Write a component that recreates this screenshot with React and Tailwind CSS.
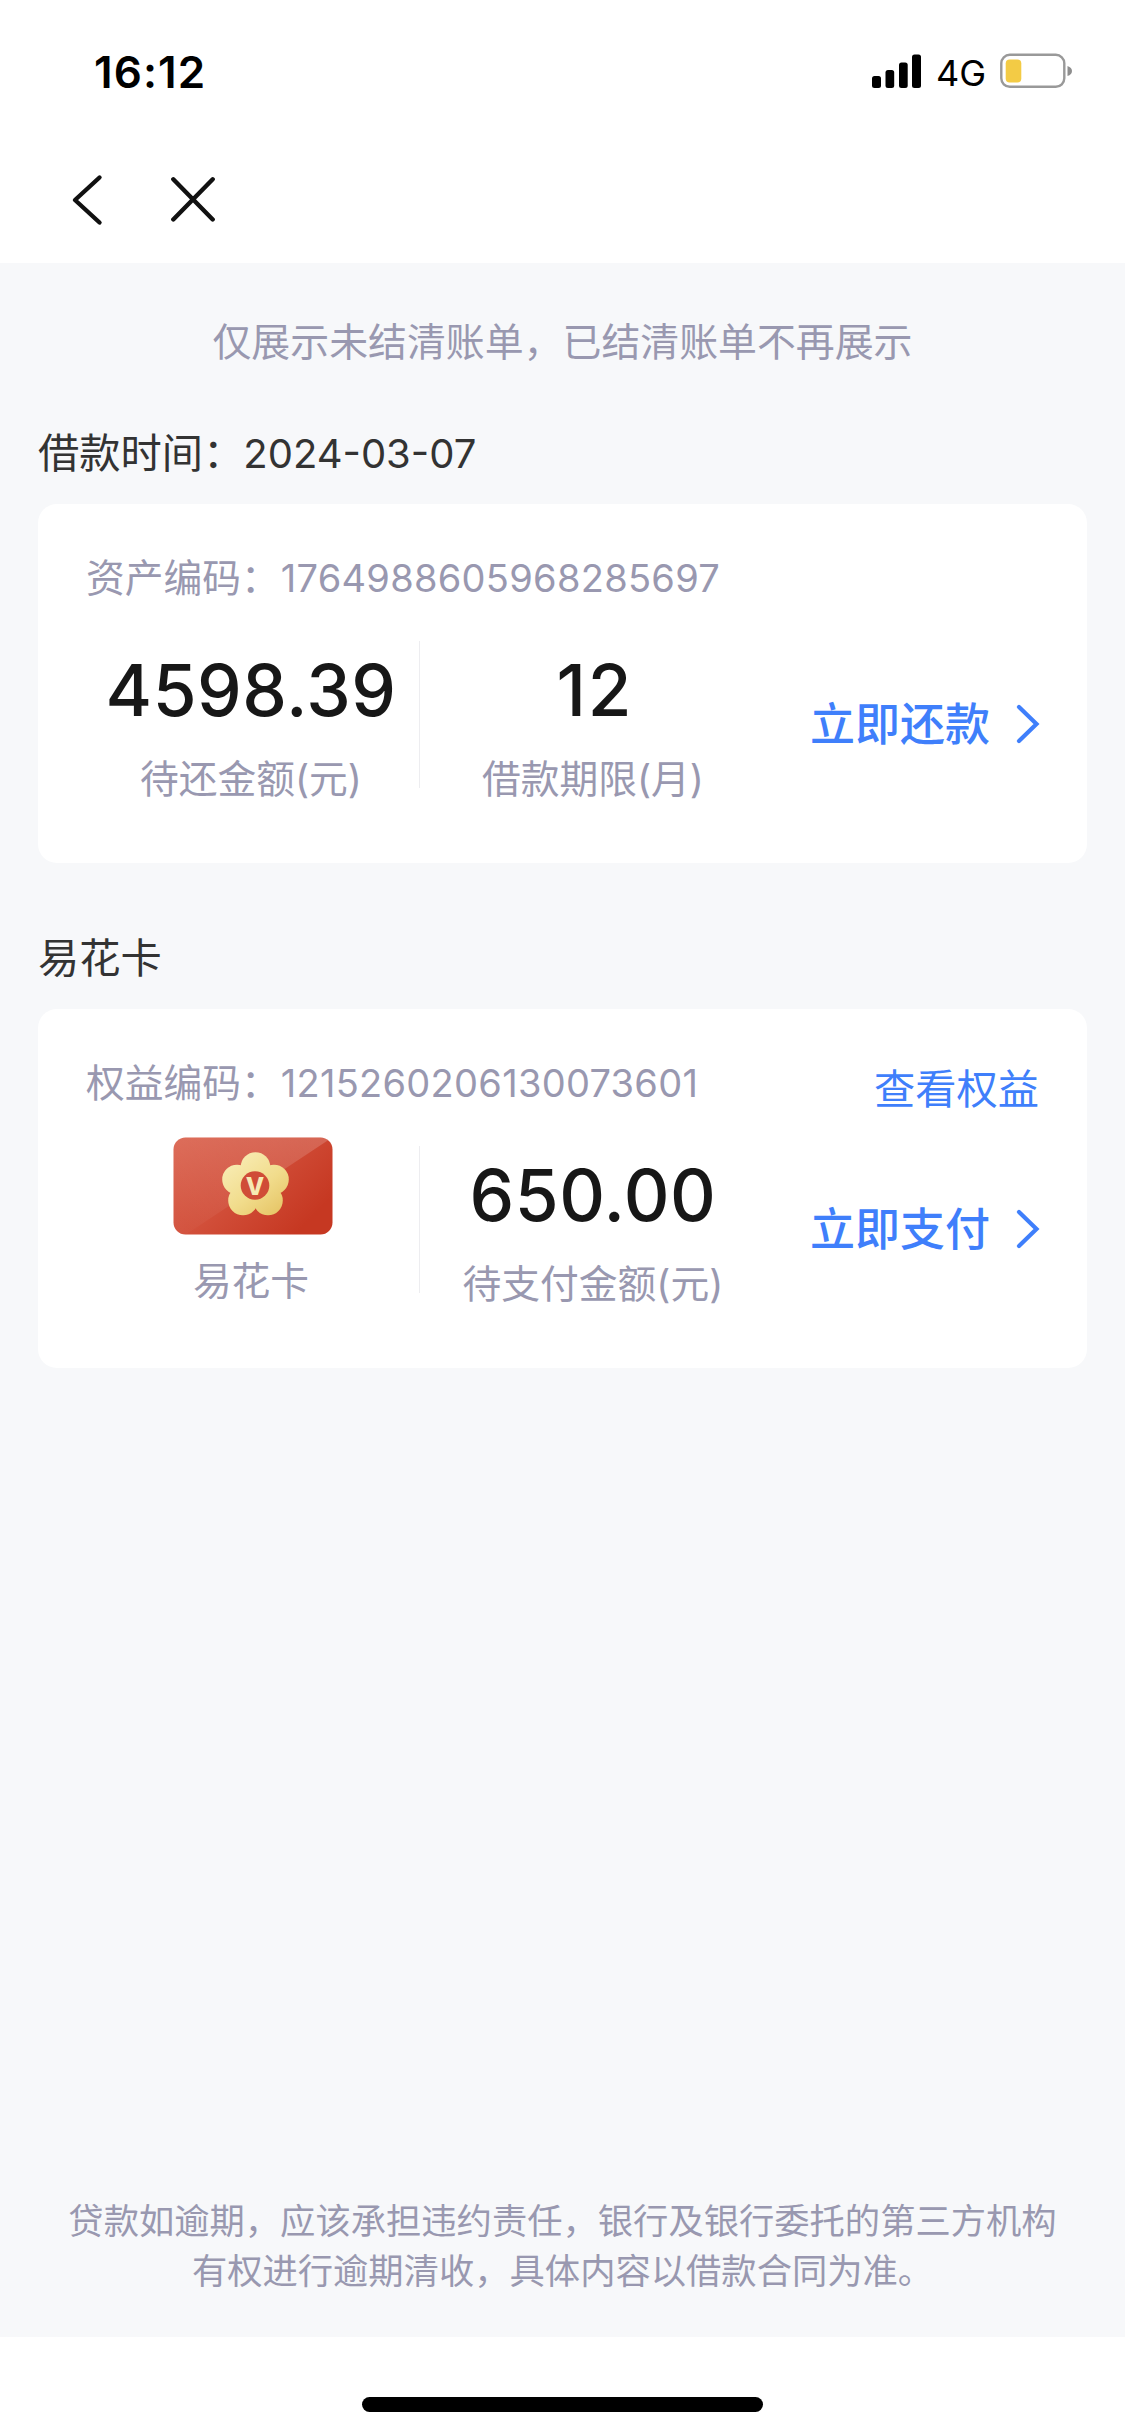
function StatusBar() {
  return (
    <div className="flex h-[144px] items-start justify-between pl-[94px] pr-[52px] pt-[46px] text-black">
      <span className="text-[44px] font-semibold leading-[52px] tracking-[1.1px]">16:12</span>
      <div className="flex h-[50px] items-center">
        <svg width="49" height="34" viewBox="0 0 49 34" className="block">
          <rect x="0" y="22" width="9" height="12" rx="2.5" />
          <rect x="13.5" y="16" width="8.7" height="18" rx="2.5" />
          <rect x="27" y="8.5" width="8.7" height="25.5" rx="2.5" />
          <rect x="40" y="0.5" width="9" height="33.5" rx="2.5" />
        </svg>
        <span className="ml-[15px] mt-[3px] w-[48px] whitespace-nowrap text-[36px] leading-[50px]">4G</span>
        <svg width="73" height="36" viewBox="0 0 73 36" className="ml-[16px] block">
          <rect x="1.3" y="1.8" width="63" height="32" rx="8.5" fill="none" stroke="#999" strokeWidth="2.4" />
          <rect x="5.7" y="6.4" width="15.6" height="23.2" rx="4" fill="#f3cb45" />
          <path d="M67.5 13 Q72 14.5 72 18 Q72 21.5 67.5 23Z" fill="#8e8e8e" />
        </svg>
      </div>
    </div>
  );
}

function Nav() {
  return (
    <div className="flex h-[119px] items-start gap-[67px] pl-[71px] pt-[29px]">
      <svg width="33" height="54" viewBox="0 0 33 54" fill="none" stroke="#111" strokeWidth="4.4" strokeLinecap="round" strokeLinejoin="round">
        <path d="M28.5 4.5 L4 27 L28.5 49.5" />
      </svg>
      <svg width="44" height="54" viewBox="0 0 44 54" fill="none" stroke="#111" strokeWidth="4.4" strokeLinecap="round">
        <path d="M2.3 6.3 L41.7 46.5 M41.7 6.3 L2.3 46.5" />
      </svg>
    </div>
  );
}

function Action({ children }) {
  return (
    <div className="flex h-[48px] items-center justify-between pr-[47px] text-[#3f7ffb]">
      <span className="whitespace-nowrap text-[45px] font-medium leading-[48px]">{children}</span>
      <svg width="25" height="42" viewBox="0 0 25 42" fill="none" stroke="currentColor" strokeWidth="4.2" strokeLinecap="round">
        <path d="M4 3 L21.5 20 L4 37" />
      </svg>
    </div>
  );
}

function Amount({ children }) {
  return (
    <span className="mb-[23px] mt-[40px] h-[84px] text-[71px] font-medium leading-[84px] tracking-[0.5px] text-[#171717]">
      {children}
    </span>
  );
}

function Card({ label, code, link, left, leftLabel, right, rightLabel, action }) {
  return (
    <section className="h-[359px] rounded-[19px] bg-white pt-[44px]">
      <div className="flex h-[60px] items-start justify-between pl-[48px] pr-[48px]">
        <span className="whitespace-nowrap text-[38.75px] leading-[60px] text-[#9998b0]">
          {label}：<span className="ml-px text-[38px] tracking-[0.28px]">{code}</span>
        </span>
        {link && <a className="mt-px text-[41.25px] leading-[70px] text-[#3f7ffb]">{link}</a>}
      </div>
      <div className="flex">
        <div className="flex w-[381px] flex-col items-center pl-[45px]">
          {left}
          <span className="text-[38.75px] leading-[48px] text-[#9998b0]">{leftLabel}</span>
        </div>
        <div className="mt-[33px] h-[147px] w-px bg-[#ededf0]" />
        <div className="flex w-[346px] flex-col items-center">
          {right}
          <span className="text-[38.75px] leading-[48px] text-[#9998b0]">{rightLabel}</span>
        </div>
        <div className="flex-1 pl-[44px] pt-[93px]">
          <Action>{action}</Action>
        </div>
      </div>
    </section>
  );
}

function FlowerCard() {
  return (
    <svg width="160" height="98" viewBox="0 0 160 98" className="mb-[22px] ml-[4px] mt-[24px] block">
      <defs>
        <linearGradient id="base" x1="0" y1="0" x2="1" y2="0.6">
          <stop offset="0" stopColor="#db6551" />
          <stop offset="0.5" stopColor="#d2503b" />
          <stop offset="1" stopColor="#c63822" />
        </linearGradient>
        <linearGradient id="shine" gradientUnits="userSpaceOnUse" x1="20" y1="95" x2="150" y2="5">
          <stop offset="0" stopColor="#fff" stopOpacity="0.02" />
          <stop offset="1" stopColor="#fff" stopOpacity="0.17" />
        </linearGradient>
        <linearGradient id="gold" gradientUnits="userSpaceOnUse" x1="60" y1="20" x2="105" y2="78">
          <stop offset="0" stopColor="#f8ecb4" />
          <stop offset="0.55" stopColor="#f1dc8c" />
          <stop offset="1" stopColor="#e6c566" />
        </linearGradient>
        <clipPath id="round">
          <rect x="0.5" y="0.5" width="159" height="97" rx="12" />
        </clipPath>
      </defs>
      <g clipPath="url(#round)">
        <rect width="160" height="98" fill="url(#base)" />
        <path d="M0 0 H160 L0 106Z" fill="url(#shine)" />
        <g fill="url(#gold)">
          <circle cx="82.5" cy="30" r="14.8" />
          <circle cx="64" cy="42.5" r="14.8" />
          <circle cx="101" cy="42.5" r="14.8" />
          <circle cx="70" cy="63.5" r="14.8" />
          <circle cx="95" cy="63.5" r="14.8" />
          <circle cx="82.5" cy="49" r="18" />
        </g>
        <circle cx="82" cy="48.5" r="14.3" fill="#d04c37" />
        <text x="82" y="57.5" textAnchor="middle" fontFamily="Inter, sans-serif" fontSize="24" fontWeight="800" fill="#f6eab4">V</text>
      </g>
    </svg>
  );
}

export default function App() {
  return (
    <div className="h-[2435px] w-[1125px] bg-white font-['Inter','Noto_Sans_CJK_SC',sans-serif]">
      <StatusBar />
      <Nav />
      <main className="flex h-[2074px] flex-col bg-[#f7f8fa] px-[38px]">
        <p className="mt-[49px] h-[60px] text-center text-[38.9px] leading-[60px] text-[#9998b0]">
          仅展示未结清账单，已结清账单不再展示
        </p>
        <h2 className="mt-[51px] h-[60px] text-[41.25px] leading-[60px] text-[#333]">
          借款时间：<span className="-ml-px text-[40px]">2024-03-07</span>
        </h2>
        <div className="mt-[21px]">
          <Card
            label="资产编码"
            code="1764988605968285697"
            left={<Amount>4598.39</Amount>}
            leftLabel="待还金额(元)"
            right={<Amount><span className="pl-[4px] tracking-[2px]">12</span></Amount>}
            rightLabel="借款期限(月)"
            action="立即还款"
          />
        </div>
        <h2 className="mt-[65px] h-[60px] text-[41.25px] leading-[60px] text-[#333]">易花卡</h2>
        <div className="mt-[21px]">
          <Card
            label="权益编码"
            code="1215260206130073601"
            link="查看权益"
            left={<FlowerCard />}
            leftLabel="易花卡"
            right={<Amount>650.00</Amount>}
            rightLabel="待支付金额(元)"
            action="立即支付"
          />
        </div>
        <p className="mb-[41px] mt-auto text-center text-[35.3px] leading-[49.5px] text-[#9998b0]">
          贷款如逾期，应该承担违约责任，银行及银行委托的第三方机构
          <br />
          有权进行逾期清收，具体内容以借款合同为准。
        </p>
      </main>
      <footer className="flex h-[98px] justify-center pt-[60px]">
        <div className="h-[15px] w-[401px] rounded-full bg-black" />
      </footer>
    </div>
  );
}
